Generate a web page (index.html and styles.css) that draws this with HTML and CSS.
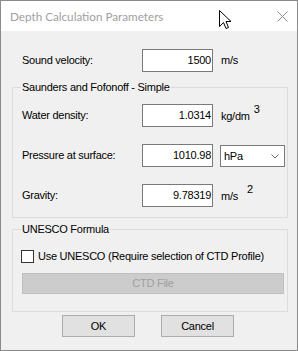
FILE: index.html
```html
<!doctype html>
<html>
  <head>
    <meta charset="UTF-8">
    <title>Depth Calculation Parameters</title>
    <link rel="stylesheet" href="styles.css">
  </head>
  <body>
    <div class="window">
      <div class="titlebar">
        <span class="title">Depth Calculation Parameters</span>
        <svg class="close" width="11" height="11" viewBox="0 0 11 11">
          <path d="M0.5 0.5 L10.5 10.5 M10.5 0.5 L0.5 10.5" stroke="#8f8f8f" stroke-width="1" fill="none"/>
        </svg>
      </div>

      <div class="content">
        <div class="row row-first">
          <span class="label">Sound velocity:</span>
          <span class="field">1500</span>
          <span class="unit">m/s</span>
        </div>

        <div class="group group-saunders">
          <span class="legend">Saunders and Fofonoff - Simple</span>
          <div class="row row-density">
            <span class="label">Water density:</span>
            <span class="field">1.0314</span>
            <span class="unit">kg/dm<sup class="exp exp-near">3</sup></span>
          </div>
          <div class="row row-spaced">
            <span class="label">Pressure at surface:</span>
            <span class="field">1010.98</span>
            <span class="select">
              <span>hPa</span>
              <svg class="chevron" width="8" height="5" viewBox="0 0 8 5">
                <path d="M0.5 0.5 L4 4 L7.5 0.5" stroke="#6d6d6d" stroke-width="1" fill="none"/>
              </svg>
            </span>
          </div>
          <div class="row row-spaced">
            <span class="label">Gravity:</span>
            <span class="field">9.78319</span>
            <span class="unit">m/s<sup class="exp exp-far">2</sup></span>
          </div>
        </div>

        <div class="group group-unesco">
          <span class="legend">UNESCO Formula</span>
          <label class="check">
            <span class="box"></span>
            <span>Use UNESCO (Require selection of CTD Profile)</span>
          </label>
          <div class="ctd-button">CTD File</div>
        </div>

        <div class="actions">
          <div class="button">OK</div>
          <div class="button">Cancel</div>
        </div>
      </div>

      <svg class="cursor" width="13" height="20" viewBox="0 0 13 20">
        <path d="M0.5 0.5 L0.5 16.5 L4.5 12.5 L7 18.5 L9.5 17.5 L7 11.5 L12 11.5 Z" fill="#fff" stroke="#000" stroke-width="1" stroke-linejoin="miter"/>
      </svg>
    </div>
  </body>
</html>
```

FILE: styles.css
```css
* {
    box-sizing: border-box;
}

body {
    margin: 0;
}

.window {
    position: relative;
    width: 298px;
    height: 351px;
    border: 1px solid #8a8a8a;
    background: #f0f0f0;
    font-family: "Liberation Sans", Arial, sans-serif;
    font-size: 11px;
    letter-spacing: -0.25px;
    line-height: 13px;
    color: #000;
}

.titlebar {
    display: flex;
    align-items: center;
    justify-content: space-between;
    height: 30px;
    padding: 0 9px 0 9px;
    background: #fff;
}

.title {
    font-family: Lato, sans-serif;
    font-size: 11.7px;
    letter-spacing: 0;
    color: #a0a0a0;
}

.content {
    display: flex;
    flex-direction: column;
    padding: 0 9px 0 11px;
}

.row {
    display: flex;
    align-items: center;
    height: 23px;
    padding-left: 9px;
}

.row-first {
    margin-top: 18px;
    padding-left: 10px;
}

.row-density {
    margin-top: 10px;
}

.row-spaced {
    margin-top: 17px;
}

.label {
    width: 120px;
}

.field {
    width: 71px;
    height: 23px;
    padding: 4px 1px 0 0;
    border: 1px solid #7a7a7a;
    background: #fff;
    text-align: right;
}

.unit {
    margin-left: 8px;
}

.exp {
    font-size: 11px;
    vertical-align: 7px;
    line-height: 0;
}

.exp-near {
    margin-left: 4px;
}

.exp-far {
    margin-left: 9px;
}

.select {
    display: flex;
    align-items: center;
    justify-content: space-between;
    align-self: flex-start;
    width: 65px;
    height: 22px;
    margin: 1px 0 0 7px;
    padding: 0 5px 0 3px;
    border: 1px solid #7a7a7a;
    background: #fff;
}

.group {
    display: flex;
    flex-direction: column;
    border: 1px solid #dcdcdc;
}

.group-saunders {
    margin-top: 15px;
    padding-bottom: 10px;
}

.group-unesco {
    margin-top: 11px;
    padding-bottom: 17px;
}

.legend {
    align-self: flex-start;
    margin: -7px 0 0 8px;
    padding: 0 1px;
    background: #f0f0f0;
}

.check {
    display: flex;
    align-items: center;
    height: 13px;
    margin-top: 14px;
    padding-left: 8px;
}

.box {
    width: 13px;
    height: 13px;
    margin-right: 4px;
    border: 1px solid #333;
    background: #fff;
}

.ctd-button {
    width: 262px;
    height: 21px;
    margin: 10px 0 0 9px;
    border: 1px solid #bfbfbf;
    background: #cccccc;
    color: #9f9f9f;
    text-align: center;
    line-height: 19px;
}

.actions {
    display: flex;
    gap: 26px;
    margin-top: 3px;
    padding-left: 50px;
}

.button {
    width: 73px;
    height: 22px;
    border: 1px solid #adadad;
    background: #e1e1e1;
    text-align: center;
    line-height: 20px;
}

.cursor {
    position: absolute;
    left: 218px;
    top: 9px;
}
```
